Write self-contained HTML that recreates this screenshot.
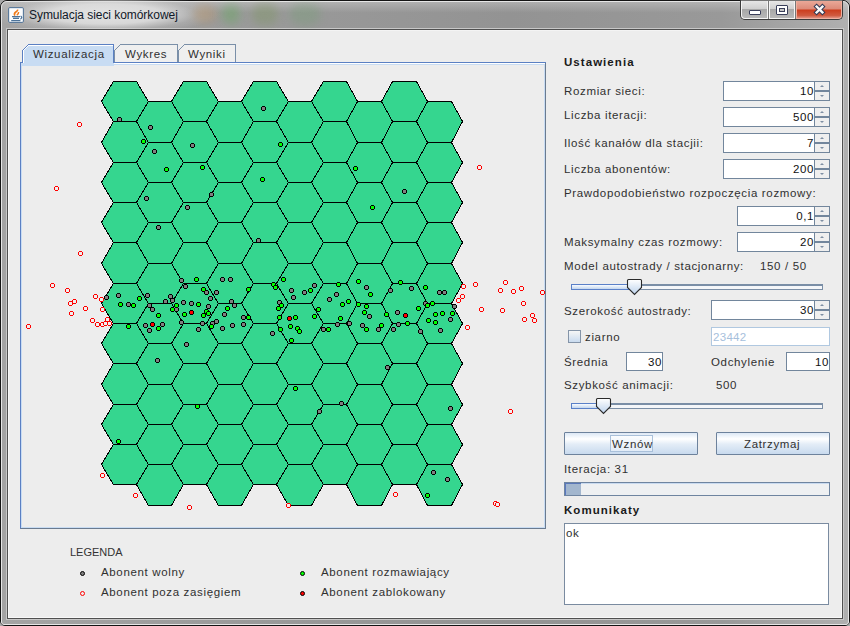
<!DOCTYPE html>
<html><head><meta charset="utf-8">
<style>
*{margin:0;padding:0;box-sizing:border-box}
html,body{width:850px;height:626px;overflow:hidden;background:#a8a8a8}
body{position:relative;font-family:"Liberation Sans",sans-serif;font-size:11px;color:#1e1e1e}
.a{position:absolute}
#win{left:0;top:0;width:850px;height:626px;border:1px solid #141414;border-radius:7px 7px 5px 5px;
 background:linear-gradient(90deg,#a4a4a4 0%,#9a9a9a 30%,#939393 60%,#999 85%,#b0b0b0 100%)}
#content{left:7px;top:29px;width:836px;height:590px;border:1px solid #505050;background:#ededed}
#glow{left:-10px;top:-6px;width:230px;height:40px;background:radial-gradient(ellipse 50% 50% at 50% 50%,rgba(232,232,232,.95) 0%,rgba(225,225,225,.85) 50%,rgba(200,200,200,.3) 80%,rgba(160,160,160,0) 100%)}
.blob{filter:blur(4px);border-radius:40%}
#title{left:29px;top:8px;font-size:12px;color:#101828;white-space:nowrap;letter-spacing:-0.05px}
.t{position:absolute;white-space:nowrap;font-size:11.5px;letter-spacing:0.65px;color:#303030;margin-top:1px}
.b{font-weight:bold;letter-spacing:1.05px;color:#1a1a1a}
.spin{position:absolute;background:#fff;border:1px solid #72869c;height:20px}
.spin .v{position:absolute;right:15px;top:3px;font-size:11.5px;letter-spacing:.6px;color:#111}
.spin .btn{position:absolute;right:0;top:0;width:15px;height:18px;border-left:1px solid #72869c;background:#efefef}
.spin .mid{position:absolute;left:0;top:8px;width:14px;height:2px;background:#72869c}
.spin .up{position:absolute;left:5px;top:3px;width:0;height:0;border-left:2.5px solid transparent;border-right:2.5px solid transparent;border-bottom:2.5px solid #7f8fa3}
.spin .dn{position:absolute;left:5px;top:13px;width:0;height:0;border-left:2.5px solid transparent;border-right:2.5px solid transparent;border-top:2.5px solid #7f8fa3}
.tf{position:absolute;background:#fff;border:1px solid #72869c}
.tf .v{position:absolute;right:0px;top:3px;font-size:11.5px;letter-spacing:.6px;color:#111}
.dot{position:absolute;width:5px;height:5px;border-radius:50%;border:1px solid #000}
</style></head><body>
<div id="win" class="a"></div>
<div class="a" style="left:1px;top:1px;width:848px;height:624px;border:1px solid #e6e6e6;border-radius:6px 6px 3px 3px"></div>
<div class="a" style="left:2px;top:2px;width:846px;height:27px;border-radius:5px 5px 0 0;background:linear-gradient(180deg,rgba(255,255,255,.25),rgba(255,255,255,0) 40%)"></div>
<div class="a" style="left:6px;top:28px;width:838px;height:592px;border:1px solid #c8c8c8"></div>
<div id="glow" class="a"></div>
<div class="a blob" style="left:194px;top:5px;width:22px;height:18px;background:rgba(190,140,80,.3)"></div>
<div class="a blob" style="left:222px;top:4px;width:18px;height:20px;background:rgba(90,170,80,.35)"></div>
<div class="a blob" style="left:252px;top:3px;width:26px;height:22px;background:rgba(120,150,90,.35)"></div>
<div class="a blob" style="left:290px;top:3px;width:30px;height:22px;background:rgba(110,160,110,.3)"></div>
<div id="title" class="a">Symulacja sieci komórkowej</div>
<!-- java icon -->
<div class="a" style="left:8px;top:7px;width:16px;height:16px;border:1px solid #5d7b9b;border-radius:2px;background:#fbfcfd;box-shadow:inset 0 0 0 1px #dfe7ef"></div>
<svg class="a" style="left:8px;top:7px" width="16" height="16">
<path d="M6.8 8.6 Q5.6 6.6 7.8 5 Q9.6 3.8 9.8 2.6" stroke="#ef7a1a" stroke-width="1.6" fill="none"/>
<path d="M8.8 8.3 Q10.8 6.8 10.6 5" stroke="#ef7a1a" stroke-width="1.4" fill="none"/>
<path d="M4 9.6 H12 M5 11.4 H11 M3.2 13.6 H12.4" stroke="#4d7399" stroke-width="1.1" fill="none"/>
<path d="M12.6 9 Q15 10.4 12.4 12.2" stroke="#4d7399" stroke-width="1.2" fill="none"/>
</svg>
<!-- caption buttons -->
<div class="a" style="left:740px;top:0px;width:103px;height:20px;border:1px solid #3c3c3c;border-top:none;border-radius:0 0 5px 5px;background:#777"></div>
<div class="a" style="left:741px;top:1px;width:27px;height:18px;border-radius:0 0 0 4px;border:1px solid #f4f4f4;border-top:none;background:linear-gradient(#e6e6e6,#d0d0d0 45%,#a8a8a8 50%,#b8b8b8)"></div>
<div class="a" style="left:769px;top:1px;width:26px;height:18px;border:1px solid #f4f4f4;border-top:none;background:linear-gradient(#e6e6e6,#d0d0d0 45%,#a8a8a8 50%,#b8b8b8)"></div>
<div class="a" style="left:796px;top:1px;width:46px;height:18px;border-radius:0 0 4px 0;border:1px solid #f0b0a0;border-top:none;background:linear-gradient(#eaa898,#dc8a78 48%,#cc3c1c 52%,#d05a40 85%,#e09080)"></div>
<div class="a" style="left:749px;top:10px;width:12px;height:5px;border:1px solid #3a3f5a;border-radius:1px;background:#fff"></div>
<div class="a" style="left:776px;top:5px;width:12px;height:10px;border:1px solid #3a3f5a;border-radius:1px;background:#fff"></div>
<div class="a" style="left:779px;top:8px;width:6px;height:4px;border:1px solid #3a3f5a;background:#c8c8c8"></div>
<svg class="a" style="left:812px;top:3px" width="15" height="13">
<path d="M4.6 3.6 L10.4 9.4 M10.4 3.6 L4.6 9.4" stroke="#333a55" stroke-width="4.4" stroke-linecap="square"/>
<path d="M4.6 3.6 L10.4 9.4 M10.4 3.6 L4.6 9.4" stroke="#fafafa" stroke-width="2.4" stroke-linecap="square"/>
</svg>
<div id="content" class="a"></div>
<div class="a" style="left:8px;top:30px;width:834px;height:588px;border:1px solid #f8f8f8;border-top-color:#f4f4f4"></div>

<!-- tabs panel -->
<div class="a" style="left:20px;top:62px;width:526px;height:467px;border-top:1px solid #5b80c3;border-left:1px solid #5b80c3;border-right:1px solid #6a7b90;border-bottom:1px solid #6a7b90;background:#ededed"></div>
<div class="a" style="left:21px;top:63px;width:524px;height:465px;border-top:1px solid #fff;border-left:1px solid #c8dcf3;border-right:1px solid #c8dcf3;border-bottom:1px solid #c8dcf3"></div>

<!--GRID--><svg class="a" style="left:0;top:0" width="850" height="626" shape-rendering="crispEdges">
<g fill="#35d68f" stroke="#000" stroke-width="1">
<polygon points="101.5,101.5 113.5,81.5 136.5,81.5 148.5,101.5 136.5,121.5 113.5,121.5"/>
<polygon points="101.5,142.5 113.5,121.5 136.5,121.5 148.5,142.5 136.5,162.5 113.5,162.5"/>
<polygon points="101.5,182.5 113.5,162.5 136.5,162.5 148.5,182.5 136.5,202.5 113.5,202.5"/>
<polygon points="101.5,222.5 113.5,202.5 136.5,202.5 148.5,222.5 136.5,242.5 113.5,242.5"/>
<polygon points="101.5,263.5 113.5,242.5 136.5,242.5 148.5,263.5 136.5,283.5 113.5,283.5"/>
<polygon points="101.5,303.5 113.5,283.5 136.5,283.5 148.5,303.5 136.5,323.5 113.5,323.5"/>
<polygon points="101.5,343.5 113.5,323.5 136.5,323.5 148.5,343.5 136.5,363.5 113.5,363.5"/>
<polygon points="101.5,384.5 113.5,363.5 136.5,363.5 148.5,384.5 136.5,404.5 113.5,404.5"/>
<polygon points="101.5,424.5 113.5,404.5 136.5,404.5 148.5,424.5 136.5,444.5 113.5,444.5"/>
<polygon points="101.5,464.5 113.5,444.5 136.5,444.5 148.5,464.5 136.5,484.5 113.5,484.5"/>
<polygon points="136.5,121.5 148.5,101.5 171.5,101.5 183.5,121.5 171.5,142.5 148.5,142.5"/>
<polygon points="136.5,162.5 148.5,142.5 171.5,142.5 183.5,162.5 171.5,182.5 148.5,182.5"/>
<polygon points="136.5,202.5 148.5,182.5 171.5,182.5 183.5,202.5 171.5,222.5 148.5,222.5"/>
<polygon points="136.5,242.5 148.5,222.5 171.5,222.5 183.5,242.5 171.5,263.5 148.5,263.5"/>
<polygon points="136.5,283.5 148.5,263.5 171.5,263.5 183.5,283.5 171.5,303.5 148.5,303.5"/>
<polygon points="136.5,323.5 148.5,303.5 171.5,303.5 183.5,323.5 171.5,343.5 148.5,343.5"/>
<polygon points="136.5,363.5 148.5,343.5 171.5,343.5 183.5,363.5 171.5,384.5 148.5,384.5"/>
<polygon points="136.5,404.5 148.5,384.5 171.5,384.5 183.5,404.5 171.5,424.5 148.5,424.5"/>
<polygon points="136.5,444.5 148.5,424.5 171.5,424.5 183.5,444.5 171.5,464.5 148.5,464.5"/>
<polygon points="136.5,484.5 148.5,464.5 171.5,464.5 183.5,484.5 171.5,505.5 148.5,505.5"/>
<polygon points="171.5,101.5 183.5,81.5 206.5,81.5 218.5,101.5 206.5,121.5 183.5,121.5"/>
<polygon points="171.5,142.5 183.5,121.5 206.5,121.5 218.5,142.5 206.5,162.5 183.5,162.5"/>
<polygon points="171.5,182.5 183.5,162.5 206.5,162.5 218.5,182.5 206.5,202.5 183.5,202.5"/>
<polygon points="171.5,222.5 183.5,202.5 206.5,202.5 218.5,222.5 206.5,242.5 183.5,242.5"/>
<polygon points="171.5,263.5 183.5,242.5 206.5,242.5 218.5,263.5 206.5,283.5 183.5,283.5"/>
<polygon points="171.5,303.5 183.5,283.5 206.5,283.5 218.5,303.5 206.5,323.5 183.5,323.5"/>
<polygon points="171.5,343.5 183.5,323.5 206.5,323.5 218.5,343.5 206.5,363.5 183.5,363.5"/>
<polygon points="171.5,384.5 183.5,363.5 206.5,363.5 218.5,384.5 206.5,404.5 183.5,404.5"/>
<polygon points="171.5,424.5 183.5,404.5 206.5,404.5 218.5,424.5 206.5,444.5 183.5,444.5"/>
<polygon points="171.5,464.5 183.5,444.5 206.5,444.5 218.5,464.5 206.5,484.5 183.5,484.5"/>
<polygon points="206.5,121.5 218.5,101.5 241.5,101.5 253.5,121.5 241.5,142.5 218.5,142.5"/>
<polygon points="206.5,162.5 218.5,142.5 241.5,142.5 253.5,162.5 241.5,182.5 218.5,182.5"/>
<polygon points="206.5,202.5 218.5,182.5 241.5,182.5 253.5,202.5 241.5,222.5 218.5,222.5"/>
<polygon points="206.5,242.5 218.5,222.5 241.5,222.5 253.5,242.5 241.5,263.5 218.5,263.5"/>
<polygon points="206.5,283.5 218.5,263.5 241.5,263.5 253.5,283.5 241.5,303.5 218.5,303.5"/>
<polygon points="206.5,323.5 218.5,303.5 241.5,303.5 253.5,323.5 241.5,343.5 218.5,343.5"/>
<polygon points="206.5,363.5 218.5,343.5 241.5,343.5 253.5,363.5 241.5,384.5 218.5,384.5"/>
<polygon points="206.5,404.5 218.5,384.5 241.5,384.5 253.5,404.5 241.5,424.5 218.5,424.5"/>
<polygon points="206.5,444.5 218.5,424.5 241.5,424.5 253.5,444.5 241.5,464.5 218.5,464.5"/>
<polygon points="206.5,484.5 218.5,464.5 241.5,464.5 253.5,484.5 241.5,505.5 218.5,505.5"/>
<polygon points="241.5,101.5 253.5,81.5 276.5,81.5 288.5,101.5 276.5,121.5 253.5,121.5"/>
<polygon points="241.5,142.5 253.5,121.5 276.5,121.5 288.5,142.5 276.5,162.5 253.5,162.5"/>
<polygon points="241.5,182.5 253.5,162.5 276.5,162.5 288.5,182.5 276.5,202.5 253.5,202.5"/>
<polygon points="241.5,222.5 253.5,202.5 276.5,202.5 288.5,222.5 276.5,242.5 253.5,242.5"/>
<polygon points="241.5,263.5 253.5,242.5 276.5,242.5 288.5,263.5 276.5,283.5 253.5,283.5"/>
<polygon points="241.5,303.5 253.5,283.5 276.5,283.5 288.5,303.5 276.5,323.5 253.5,323.5"/>
<polygon points="241.5,343.5 253.5,323.5 276.5,323.5 288.5,343.5 276.5,363.5 253.5,363.5"/>
<polygon points="241.5,384.5 253.5,363.5 276.5,363.5 288.5,384.5 276.5,404.5 253.5,404.5"/>
<polygon points="241.5,424.5 253.5,404.5 276.5,404.5 288.5,424.5 276.5,444.5 253.5,444.5"/>
<polygon points="241.5,464.5 253.5,444.5 276.5,444.5 288.5,464.5 276.5,484.5 253.5,484.5"/>
<polygon points="276.5,121.5 288.5,101.5 311.5,101.5 323.5,121.5 311.5,142.5 288.5,142.5"/>
<polygon points="276.5,162.5 288.5,142.5 311.5,142.5 323.5,162.5 311.5,182.5 288.5,182.5"/>
<polygon points="276.5,202.5 288.5,182.5 311.5,182.5 323.5,202.5 311.5,222.5 288.5,222.5"/>
<polygon points="276.5,242.5 288.5,222.5 311.5,222.5 323.5,242.5 311.5,263.5 288.5,263.5"/>
<polygon points="276.5,283.5 288.5,263.5 311.5,263.5 323.5,283.5 311.5,303.5 288.5,303.5"/>
<polygon points="276.5,323.5 288.5,303.5 311.5,303.5 323.5,323.5 311.5,343.5 288.5,343.5"/>
<polygon points="276.5,363.5 288.5,343.5 311.5,343.5 323.5,363.5 311.5,384.5 288.5,384.5"/>
<polygon points="276.5,404.5 288.5,384.5 311.5,384.5 323.5,404.5 311.5,424.5 288.5,424.5"/>
<polygon points="276.5,444.5 288.5,424.5 311.5,424.5 323.5,444.5 311.5,464.5 288.5,464.5"/>
<polygon points="276.5,484.5 288.5,464.5 311.5,464.5 323.5,484.5 311.5,505.5 288.5,505.5"/>
<polygon points="311.5,101.5 323.5,81.5 346.5,81.5 357.5,101.5 346.5,121.5 323.5,121.5"/>
<polygon points="311.5,142.5 323.5,121.5 346.5,121.5 357.5,142.5 346.5,162.5 323.5,162.5"/>
<polygon points="311.5,182.5 323.5,162.5 346.5,162.5 357.5,182.5 346.5,202.5 323.5,202.5"/>
<polygon points="311.5,222.5 323.5,202.5 346.5,202.5 357.5,222.5 346.5,242.5 323.5,242.5"/>
<polygon points="311.5,263.5 323.5,242.5 346.5,242.5 357.5,263.5 346.5,283.5 323.5,283.5"/>
<polygon points="311.5,303.5 323.5,283.5 346.5,283.5 357.5,303.5 346.5,323.5 323.5,323.5"/>
<polygon points="311.5,343.5 323.5,323.5 346.5,323.5 357.5,343.5 346.5,363.5 323.5,363.5"/>
<polygon points="311.5,384.5 323.5,363.5 346.5,363.5 357.5,384.5 346.5,404.5 323.5,404.5"/>
<polygon points="311.5,424.5 323.5,404.5 346.5,404.5 357.5,424.5 346.5,444.5 323.5,444.5"/>
<polygon points="311.5,464.5 323.5,444.5 346.5,444.5 357.5,464.5 346.5,484.5 323.5,484.5"/>
<polygon points="346.5,121.5 357.5,101.5 381.5,101.5 392.5,121.5 381.5,142.5 357.5,142.5"/>
<polygon points="346.5,162.5 357.5,142.5 381.5,142.5 392.5,162.5 381.5,182.5 357.5,182.5"/>
<polygon points="346.5,202.5 357.5,182.5 381.5,182.5 392.5,202.5 381.5,222.5 357.5,222.5"/>
<polygon points="346.5,242.5 357.5,222.5 381.5,222.5 392.5,242.5 381.5,263.5 357.5,263.5"/>
<polygon points="346.5,283.5 357.5,263.5 381.5,263.5 392.5,283.5 381.5,303.5 357.5,303.5"/>
<polygon points="346.5,323.5 357.5,303.5 381.5,303.5 392.5,323.5 381.5,343.5 357.5,343.5"/>
<polygon points="346.5,363.5 357.5,343.5 381.5,343.5 392.5,363.5 381.5,384.5 357.5,384.5"/>
<polygon points="346.5,404.5 357.5,384.5 381.5,384.5 392.5,404.5 381.5,424.5 357.5,424.5"/>
<polygon points="346.5,444.5 357.5,424.5 381.5,424.5 392.5,444.5 381.5,464.5 357.5,464.5"/>
<polygon points="346.5,484.5 357.5,464.5 381.5,464.5 392.5,484.5 381.5,505.5 357.5,505.5"/>
<polygon points="381.5,101.5 392.5,81.5 416.5,81.5 427.5,101.5 416.5,121.5 392.5,121.5"/>
<polygon points="381.5,142.5 392.5,121.5 416.5,121.5 427.5,142.5 416.5,162.5 392.5,162.5"/>
<polygon points="381.5,182.5 392.5,162.5 416.5,162.5 427.5,182.5 416.5,202.5 392.5,202.5"/>
<polygon points="381.5,222.5 392.5,202.5 416.5,202.5 427.5,222.5 416.5,242.5 392.5,242.5"/>
<polygon points="381.5,263.5 392.5,242.5 416.5,242.5 427.5,263.5 416.5,283.5 392.5,283.5"/>
<polygon points="381.5,303.5 392.5,283.5 416.5,283.5 427.5,303.5 416.5,323.5 392.5,323.5"/>
<polygon points="381.5,343.5 392.5,323.5 416.5,323.5 427.5,343.5 416.5,363.5 392.5,363.5"/>
<polygon points="381.5,384.5 392.5,363.5 416.5,363.5 427.5,384.5 416.5,404.5 392.5,404.5"/>
<polygon points="381.5,424.5 392.5,404.5 416.5,404.5 427.5,424.5 416.5,444.5 392.5,444.5"/>
<polygon points="381.5,464.5 392.5,444.5 416.5,444.5 427.5,464.5 416.5,484.5 392.5,484.5"/>
<polygon points="416.5,121.5 427.5,101.5 451.5,101.5 462.5,121.5 451.5,142.5 427.5,142.5"/>
<polygon points="416.5,162.5 427.5,142.5 451.5,142.5 462.5,162.5 451.5,182.5 427.5,182.5"/>
<polygon points="416.5,202.5 427.5,182.5 451.5,182.5 462.5,202.5 451.5,222.5 427.5,222.5"/>
<polygon points="416.5,242.5 427.5,222.5 451.5,222.5 462.5,242.5 451.5,263.5 427.5,263.5"/>
<polygon points="416.5,283.5 427.5,263.5 451.5,263.5 462.5,283.5 451.5,303.5 427.5,303.5"/>
<polygon points="416.5,323.5 427.5,303.5 451.5,303.5 462.5,323.5 451.5,343.5 427.5,343.5"/>
<polygon points="416.5,363.5 427.5,343.5 451.5,343.5 462.5,363.5 451.5,384.5 427.5,384.5"/>
<polygon points="416.5,404.5 427.5,384.5 451.5,384.5 462.5,404.5 451.5,424.5 427.5,424.5"/>
<polygon points="416.5,444.5 427.5,424.5 451.5,424.5 462.5,444.5 451.5,464.5 427.5,464.5"/>
<polygon points="416.5,484.5 427.5,464.5 451.5,464.5 462.5,484.5 451.5,505.5 427.5,505.5"/>
</g>
<g stroke-width="1">
<circle cx="79.5" cy="124.5" r="2" fill="#f0f0f0" stroke="#ff0000"/>
<circle cx="119.5" cy="119.5" r="2" fill="#808080" stroke="#000"/>
<circle cx="143.5" cy="141.5" r="2" fill="#00ff00" stroke="#000"/>
<circle cx="150.5" cy="127.5" r="2" fill="#808080" stroke="#000"/>
<circle cx="154.5" cy="151.5" r="2" fill="#808080" stroke="#000"/>
<circle cx="192.5" cy="145.5" r="2" fill="#808080" stroke="#000"/>
<circle cx="166.5" cy="169.5" r="2" fill="#00ff00" stroke="#000"/>
<circle cx="202.5" cy="167.5" r="2" fill="#00ff00" stroke="#000"/>
<circle cx="263.5" cy="108.5" r="2" fill="#808080" stroke="#000"/>
<circle cx="280.5" cy="144.5" r="2" fill="#00ff00" stroke="#000"/>
<circle cx="56.5" cy="188.5" r="2" fill="#f0f0f0" stroke="#ff0000"/>
<circle cx="146.5" cy="198.5" r="2" fill="#808080" stroke="#000"/>
<circle cx="158.5" cy="227.5" r="2" fill="#808080" stroke="#000"/>
<circle cx="80.5" cy="253.5" r="2" fill="#f0f0f0" stroke="#ff0000"/>
<circle cx="262.5" cy="179.5" r="2" fill="#00ff00" stroke="#000"/>
<circle cx="211.5" cy="194.5" r="2" fill="#808080" stroke="#000"/>
<circle cx="187.5" cy="207.5" r="2" fill="#808080" stroke="#000"/>
<circle cx="258.5" cy="240.5" r="2" fill="#808080" stroke="#000"/>
<circle cx="355.5" cy="168.5" r="2" fill="#00ff00" stroke="#000"/>
<circle cx="404.5" cy="191.5" r="2" fill="#808080" stroke="#000"/>
<circle cx="372.5" cy="207.5" r="2" fill="#00ff00" stroke="#000"/>
<circle cx="479.5" cy="167.5" r="2" fill="#f0f0f0" stroke="#ff0000"/>
<circle cx="52.5" cy="285.5" r="2" fill="#f0f0f0" stroke="#ff0000"/>
<circle cx="67.5" cy="290.5" r="2" fill="#f0f0f0" stroke="#ff0000"/>
<circle cx="70.5" cy="303.5" r="2" fill="#f0f0f0" stroke="#ff0000"/>
<circle cx="74.5" cy="301.5" r="2" fill="#f0f0f0" stroke="#ff0000"/>
<circle cx="85.5" cy="308.5" r="2" fill="#f0f0f0" stroke="#ff0000"/>
<circle cx="71.5" cy="313.5" r="2" fill="#f0f0f0" stroke="#ff0000"/>
<circle cx="95.5" cy="296.5" r="2" fill="#f0f0f0" stroke="#ff0000"/>
<circle cx="101.5" cy="299.5" r="2" fill="#f0f0f0" stroke="#ff0000"/>
<circle cx="102.5" cy="309.5" r="2" fill="#f0f0f0" stroke="#ff0000"/>
<circle cx="92.5" cy="320.5" r="2" fill="#f0f0f0" stroke="#ff0000"/>
<circle cx="97.5" cy="324.5" r="2" fill="#f0f0f0" stroke="#ff0000"/>
<circle cx="102.5" cy="324.5" r="2" fill="#f0f0f0" stroke="#ff0000"/>
<circle cx="105.5" cy="323.5" r="2" fill="#f0f0f0" stroke="#ff0000"/>
<circle cx="107.5" cy="319.5" r="2" fill="#f0f0f0" stroke="#ff0000"/>
<circle cx="109.5" cy="323.5" r="2" fill="#f0f0f0" stroke="#ff0000"/>
<circle cx="28.5" cy="326.5" r="2" fill="#f0f0f0" stroke="#ff0000"/>
<circle cx="106.5" cy="297.5" r="2" fill="#808080" stroke="#000"/>
<circle cx="118.5" cy="295.5" r="2" fill="#808080" stroke="#000"/>
<circle cx="120.5" cy="304.5" r="2" fill="#00ff00" stroke="#000"/>
<circle cx="128.5" cy="304.5" r="2" fill="#808080" stroke="#000"/>
<circle cx="133.5" cy="305.5" r="2" fill="#00ff00" stroke="#000"/>
<circle cx="139.5" cy="298.5" r="2" fill="#00ff00" stroke="#000"/>
<circle cx="147.5" cy="295.5" r="2" fill="#808080" stroke="#000"/>
<circle cx="149.5" cy="305.5" r="2" fill="#808080" stroke="#000"/>
<circle cx="152.5" cy="309.5" r="2" fill="#808080" stroke="#000"/>
<circle cx="158.5" cy="315.5" r="2" fill="#00ff00" stroke="#000"/>
<circle cx="145.5" cy="325.5" r="2" fill="#808080" stroke="#000"/>
<circle cx="152.5" cy="324.5" r="2" fill="#ff0000" stroke="#000"/>
<circle cx="149.5" cy="330.5" r="2" fill="#808080" stroke="#000"/>
<circle cx="158.5" cy="328.5" r="2" fill="#00ff00" stroke="#000"/>
<circle cx="162.5" cy="324.5" r="2" fill="#808080" stroke="#000"/>
<circle cx="128.5" cy="326.5" r="2" fill="#00ff00" stroke="#000"/>
<circle cx="165.5" cy="301.5" r="2" fill="#808080" stroke="#000"/>
<circle cx="170.5" cy="296.5" r="2" fill="#808080" stroke="#000"/>
<circle cx="172.5" cy="300.5" r="2" fill="#808080" stroke="#000"/>
<circle cx="176.5" cy="305.5" r="2" fill="#00ff00" stroke="#000"/>
<circle cx="172.5" cy="309.5" r="2" fill="#00ff00" stroke="#000"/>
<circle cx="176.5" cy="309.5" r="2" fill="#808080" stroke="#000"/>
<circle cx="181.5" cy="280.5" r="2" fill="#808080" stroke="#000"/>
<circle cx="196.5" cy="279.5" r="2" fill="#00ff00" stroke="#000"/>
<circle cx="222.5" cy="279.5" r="2" fill="#808080" stroke="#000"/>
<circle cx="230.5" cy="279.5" r="2" fill="#808080" stroke="#000"/>
<circle cx="185.5" cy="286.5" r="2" fill="#808080" stroke="#000"/>
<circle cx="203.5" cy="289.5" r="2" fill="#00ff00" stroke="#000"/>
<circle cx="206.5" cy="292.5" r="2" fill="#808080" stroke="#000"/>
<circle cx="216.5" cy="292.5" r="2" fill="#808080" stroke="#000"/>
<circle cx="210.5" cy="298.5" r="2" fill="#808080" stroke="#000"/>
<circle cx="248.5" cy="289.5" r="2" fill="#00ff00" stroke="#000"/>
<circle cx="183.5" cy="302.5" r="2" fill="#808080" stroke="#000"/>
<circle cx="191.5" cy="303.5" r="2" fill="#808080" stroke="#000"/>
<circle cx="198.5" cy="304.5" r="2" fill="#00ff00" stroke="#000"/>
<circle cx="208.5" cy="306.5" r="2" fill="#808080" stroke="#000"/>
<circle cx="184.5" cy="314.5" r="2" fill="#00ff00" stroke="#000"/>
<circle cx="191.5" cy="312.5" r="2" fill="#ff0000" stroke="#000"/>
<circle cx="206.5" cy="311.5" r="2" fill="#00ff00" stroke="#000"/>
<circle cx="208.5" cy="313.5" r="2" fill="#00ff00" stroke="#000"/>
<circle cx="203.5" cy="315.5" r="2" fill="#00ff00" stroke="#000"/>
<circle cx="231.5" cy="301.5" r="2" fill="#808080" stroke="#000"/>
<circle cx="234.5" cy="305.5" r="2" fill="#808080" stroke="#000"/>
<circle cx="227.5" cy="308.5" r="2" fill="#00ff00" stroke="#000"/>
<circle cx="224.5" cy="314.5" r="2" fill="#808080" stroke="#000"/>
<circle cx="181.5" cy="322.5" r="2" fill="#808080" stroke="#000"/>
<circle cx="202.5" cy="323.5" r="2" fill="#808080" stroke="#000"/>
<circle cx="212.5" cy="323.5" r="2" fill="#808080" stroke="#000"/>
<circle cx="216.5" cy="321.5" r="2" fill="#808080" stroke="#000"/>
<circle cx="211.5" cy="326.5" r="2" fill="#00ff00" stroke="#000"/>
<circle cx="198.5" cy="329.5" r="2" fill="#808080" stroke="#000"/>
<circle cx="222.5" cy="328.5" r="2" fill="#808080" stroke="#000"/>
<circle cx="232.5" cy="325.5" r="2" fill="#808080" stroke="#000"/>
<circle cx="243.5" cy="324.5" r="2" fill="#808080" stroke="#000"/>
<circle cx="243.5" cy="317.5" r="2" fill="#808080" stroke="#000"/>
<circle cx="248.5" cy="317.5" r="2" fill="#00ff00" stroke="#000"/>
<circle cx="283.5" cy="279.5" r="2" fill="#00ff00" stroke="#000"/>
<circle cx="273.5" cy="284.5" r="2" fill="#00ff00" stroke="#000"/>
<circle cx="275.5" cy="287.5" r="2" fill="#00ff00" stroke="#000"/>
<circle cx="291.5" cy="290.5" r="2" fill="#808080" stroke="#000"/>
<circle cx="293.5" cy="297.5" r="2" fill="#808080" stroke="#000"/>
<circle cx="304.5" cy="292.5" r="2" fill="#808080" stroke="#000"/>
<circle cx="310.5" cy="290.5" r="2" fill="#00ff00" stroke="#000"/>
<circle cx="314.5" cy="285.5" r="2" fill="#808080" stroke="#000"/>
<circle cx="279.5" cy="302.5" r="2" fill="#808080" stroke="#000"/>
<circle cx="281.5" cy="305.5" r="2" fill="#00ff00" stroke="#000"/>
<circle cx="278.5" cy="308.5" r="2" fill="#00ff00" stroke="#000"/>
<circle cx="279.5" cy="317.5" r="2" fill="#00ff00" stroke="#000"/>
<circle cx="289.5" cy="318.5" r="2" fill="#ff0000" stroke="#000"/>
<circle cx="295.5" cy="317.5" r="2" fill="#00ff00" stroke="#000"/>
<circle cx="290.5" cy="326.5" r="2" fill="#00ff00" stroke="#000"/>
<circle cx="297.5" cy="328.5" r="2" fill="#00ff00" stroke="#000"/>
<circle cx="299.5" cy="331.5" r="2" fill="#00ff00" stroke="#000"/>
<circle cx="280.5" cy="329.5" r="2" fill="#00ff00" stroke="#000"/>
<circle cx="272.5" cy="333.5" r="2" fill="#808080" stroke="#000"/>
<circle cx="314.5" cy="316.5" r="2" fill="#00ff00" stroke="#000"/>
<circle cx="318.5" cy="309.5" r="2" fill="#00ff00" stroke="#000"/>
<circle cx="338.5" cy="284.5" r="2" fill="#00ff00" stroke="#000"/>
<circle cx="358.5" cy="281.5" r="2" fill="#00ff00" stroke="#000"/>
<circle cx="366.5" cy="287.5" r="2" fill="#808080" stroke="#000"/>
<circle cx="370.5" cy="294.5" r="2" fill="#00ff00" stroke="#000"/>
<circle cx="336.5" cy="294.5" r="2" fill="#808080" stroke="#000"/>
<circle cx="329.5" cy="299.5" r="2" fill="#808080" stroke="#000"/>
<circle cx="348.5" cy="301.5" r="2" fill="#00ff00" stroke="#000"/>
<circle cx="342.5" cy="304.5" r="2" fill="#00ff00" stroke="#000"/>
<circle cx="358.5" cy="304.5" r="2" fill="#00ff00" stroke="#000"/>
<circle cx="366.5" cy="306.5" r="2" fill="#00ff00" stroke="#000"/>
<circle cx="364.5" cy="312.5" r="2" fill="#00ff00" stroke="#000"/>
<circle cx="369.5" cy="316.5" r="2" fill="#808080" stroke="#000"/>
<circle cx="386.5" cy="314.5" r="2" fill="#00ff00" stroke="#000"/>
<circle cx="340.5" cy="318.5" r="2" fill="#00ff00" stroke="#000"/>
<circle cx="337.5" cy="324.5" r="2" fill="#808080" stroke="#000"/>
<circle cx="349.5" cy="323.5" r="2" fill="#808080" stroke="#000"/>
<circle cx="323.5" cy="329.5" r="2" fill="#808080" stroke="#000"/>
<circle cx="328.5" cy="329.5" r="2" fill="#00ff00" stroke="#000"/>
<circle cx="362.5" cy="325.5" r="2" fill="#808080" stroke="#000"/>
<circle cx="366.5" cy="329.5" r="2" fill="#00ff00" stroke="#000"/>
<circle cx="381.5" cy="325.5" r="2" fill="#00ff00" stroke="#000"/>
<circle cx="378.5" cy="329.5" r="2" fill="#808080" stroke="#000"/>
<circle cx="400.5" cy="282.5" r="2" fill="#00ff00" stroke="#000"/>
<circle cx="390.5" cy="290.5" r="2" fill="#808080" stroke="#000"/>
<circle cx="411.5" cy="288.5" r="2" fill="#808080" stroke="#000"/>
<circle cx="425.5" cy="287.5" r="2" fill="#00ff00" stroke="#000"/>
<circle cx="439.5" cy="292.5" r="2" fill="#808080" stroke="#000"/>
<circle cx="444.5" cy="292.5" r="2" fill="#808080" stroke="#000"/>
<circle cx="425.5" cy="303.5" r="2" fill="#808080" stroke="#000"/>
<circle cx="427.5" cy="305.5" r="2" fill="#00ff00" stroke="#000"/>
<circle cx="432.5" cy="303.5" r="2" fill="#00ff00" stroke="#000"/>
<circle cx="454.5" cy="306.5" r="2" fill="#808080" stroke="#000"/>
<circle cx="418.5" cy="308.5" r="2" fill="#00ff00" stroke="#000"/>
<circle cx="397.5" cy="312.5" r="2" fill="#808080" stroke="#000"/>
<circle cx="405.5" cy="315.5" r="2" fill="#ff0000" stroke="#000"/>
<circle cx="435.5" cy="314.5" r="2" fill="#00ff00" stroke="#000"/>
<circle cx="442.5" cy="313.5" r="2" fill="#00ff00" stroke="#000"/>
<circle cx="452.5" cy="313.5" r="2" fill="#00ff00" stroke="#000"/>
<circle cx="450.5" cy="319.5" r="2" fill="#808080" stroke="#000"/>
<circle cx="428.5" cy="320.5" r="2" fill="#00ff00" stroke="#000"/>
<circle cx="435.5" cy="322.5" r="2" fill="#00ff00" stroke="#000"/>
<circle cx="407.5" cy="323.5" r="2" fill="#00ff00" stroke="#000"/>
<circle cx="398.5" cy="324.5" r="2" fill="#808080" stroke="#000"/>
<circle cx="393.5" cy="329.5" r="2" fill="#808080" stroke="#000"/>
<circle cx="420.5" cy="331.5" r="2" fill="#808080" stroke="#000"/>
<circle cx="440.5" cy="330.5" r="2" fill="#808080" stroke="#000"/>
<circle cx="463.5" cy="286.5" r="2" fill="#f0f0f0" stroke="#ff0000"/>
<circle cx="475.5" cy="284.5" r="2" fill="#f0f0f0" stroke="#ff0000"/>
<circle cx="505.5" cy="282.5" r="2" fill="#f0f0f0" stroke="#ff0000"/>
<circle cx="500.5" cy="290.5" r="2" fill="#f0f0f0" stroke="#ff0000"/>
<circle cx="513.5" cy="291.5" r="2" fill="#f0f0f0" stroke="#ff0000"/>
<circle cx="521.5" cy="288.5" r="2" fill="#f0f0f0" stroke="#ff0000"/>
<circle cx="542.5" cy="292.5" r="2" fill="#f0f0f0" stroke="#ff0000"/>
<circle cx="462.5" cy="296.5" r="2" fill="#f0f0f0" stroke="#ff0000"/>
<circle cx="458.5" cy="300.5" r="2" fill="#f0f0f0" stroke="#ff0000"/>
<circle cx="523.5" cy="303.5" r="2" fill="#f0f0f0" stroke="#ff0000"/>
<circle cx="481.5" cy="309.5" r="2" fill="#f0f0f0" stroke="#ff0000"/>
<circle cx="502.5" cy="310.5" r="2" fill="#f0f0f0" stroke="#ff0000"/>
<circle cx="532.5" cy="315.5" r="2" fill="#f0f0f0" stroke="#ff0000"/>
<circle cx="524.5" cy="319.5" r="2" fill="#f0f0f0" stroke="#ff0000"/>
<circle cx="534.5" cy="320.5" r="2" fill="#f0f0f0" stroke="#ff0000"/>
<circle cx="467.5" cy="327.5" r="2" fill="#f0f0f0" stroke="#ff0000"/>
<circle cx="157.5" cy="360.5" r="2" fill="#808080" stroke="#000"/>
<circle cx="186.5" cy="344.5" r="2" fill="#808080" stroke="#000"/>
<circle cx="291.5" cy="340.5" r="2" fill="#00ff00" stroke="#000"/>
<circle cx="295.5" cy="388.5" r="2" fill="#00ff00" stroke="#000"/>
<circle cx="197.5" cy="406.5" r="2" fill="#00ff00" stroke="#000"/>
<circle cx="319.5" cy="411.5" r="2" fill="#808080" stroke="#000"/>
<circle cx="387.5" cy="367.5" r="2" fill="#808080" stroke="#000"/>
<circle cx="341.5" cy="403.5" r="2" fill="#808080" stroke="#000"/>
<circle cx="450.5" cy="408.5" r="2" fill="#808080" stroke="#000"/>
<circle cx="510.5" cy="411.5" r="2" fill="#f0f0f0" stroke="#ff0000"/>
<circle cx="447.5" cy="479.5" r="2" fill="#808080" stroke="#000"/>
<circle cx="495.5" cy="503.5" r="2" fill="#f0f0f0" stroke="#ff0000"/>
<circle cx="497.5" cy="504.5" r="2" fill="#f0f0f0" stroke="#ff0000"/>
<circle cx="118.5" cy="441.5" r="2" fill="#00ff00" stroke="#000"/>
<circle cx="102.5" cy="475.5" r="2" fill="#f0f0f0" stroke="#ff0000"/>
<circle cx="135.5" cy="495.5" r="2" fill="#f0f0f0" stroke="#ff0000"/>
<circle cx="189.5" cy="507.5" r="2" fill="#f0f0f0" stroke="#ff0000"/>
<circle cx="288.5" cy="505.5" r="2" fill="#f0f0f0" stroke="#ff0000"/>
<circle cx="433.5" cy="472.5" r="2" fill="#808080" stroke="#000"/>
<circle cx="427.5" cy="495.5" r="2" fill="#00ff00" stroke="#000"/>
<circle cx="395.5" cy="494.5" r="2" fill="#f0f0f0" stroke="#ff0000"/>
</g></svg><!--/GRID-->
<!-- tabs -->
<svg class="a" style="left:0;top:0" width="850" height="70" shape-rendering="crispEdges">
<polygon points="114.5,62.5 114.5,50.5 120.5,44.5 177.5,44.5 177.5,62.5" fill="#efefef" stroke="#7a8fa8"/>
<polygon points="178.5,62.5 178.5,50.5 184.5,44.5 235.5,44.5 235.5,62.5" fill="#efefef" stroke="#7a8fa8"/>
<rect x="20" y="62" width="526" height="1" fill="#5b80c3"/>
<rect x="21" y="63" width="524" height="1" fill="#ffffff"/>
<rect x="21" y="64" width="524" height="1" fill="#c8dcf3"/>
<polygon points="20,62 22,62 22,50 28,44 114,44 114,66 21,66 20,66" fill="#c8dcf3"/>
<polyline points="20.5,62.5 22.5,62.5 22.5,50.5 28.5,44.5 113.5,44.5 113.5,62.5" fill="none" stroke="#5b80c3"/>
<polyline points="23.5,62.5 23.5,50.5 28.5,45.5 112.5,45.5" fill="none" stroke="#ffffff"/>
<rect x="20" y="62" width="1" height="8" fill="#5b80c3"/>
</svg>
<div class="t" style="left:33px;top:47px">Wizualizacja</div>
<div class="t" style="left:125px;top:47px">Wykres</div>
<div class="t" style="left:188px;top:47px">Wyniki</div>
<!-- right panel labels -->
<div class="t b" style="left:564px;top:55px">Ustawienia</div>
<div class="t" style="left:564px;top:84px">Rozmiar sieci:</div>
<div class="t" style="left:564px;top:108px">Liczba iteracji:</div>
<div class="t" style="left:564px;top:136px">Ilość kanałów dla stacjii:</div>
<div class="t" style="left:564px;top:162px">Liczba abonentów:</div>
<div class="t" style="left:564px;top:186px">Prawdopodobieństwo rozpoczęcia rozmowy:</div>
<div class="t" style="left:564px;top:235px">Maksymalny czas rozmowy:</div>
<div class="t" style="left:564px;top:259px">Model autostrady / stacjonarny:</div>
<div class="t" style="left:760px;top:259px">150 / 50</div>
<div class="t" style="left:564px;top:304px">Szerokość autostrady:</div>
<div class="t" style="left:585px;top:330px">ziarno</div>
<div class="t" style="left:564px;top:355px">Średnia</div>
<div class="t" style="left:711px;top:355px">Odchylenie</div>
<div class="t" style="left:564px;top:378px">Szybkość animacji:</div>
<div class="t" style="left:716px;top:378px">500</div>
<div class="t" style="left:564px;top:462px">Iteracja: 31</div>
<div class="t b" style="left:564px;top:503px">Komunikaty</div>

<div class="spin" style="left:723px;top:81px;width:107px"><span class="v">10</span><div class="btn"><div class="up"></div><div class="mid"></div><div class="dn"></div></div></div>
<div class="spin" style="left:723px;top:107px;width:107px"><span class="v">500</span><div class="btn"><div class="up"></div><div class="mid"></div><div class="dn"></div></div></div>
<div class="spin" style="left:723px;top:133px;width:107px"><span class="v">7</span><div class="btn"><div class="up"></div><div class="mid"></div><div class="dn"></div></div></div>
<div class="spin" style="left:723px;top:159px;width:107px"><span class="v">200</span><div class="btn"><div class="up"></div><div class="mid"></div><div class="dn"></div></div></div>
<div class="spin" style="left:737px;top:206px;width:93px"><span class="v">0,1</span><div class="btn"><div class="up"></div><div class="mid"></div><div class="dn"></div></div></div>
<div class="spin" style="left:737px;top:232px;width:93px"><span class="v">20</span><div class="btn"><div class="up"></div><div class="mid"></div><div class="dn"></div></div></div>
<div class="spin" style="left:711px;top:300px;width:119px"><span class="v">30</span><div class="btn"><div class="up"></div><div class="mid"></div><div class="dn"></div></div></div>

<div class="tf" style="left:711px;top:327px;width:119px;height:19px;border-color:#b0c8e0"><span class="a" style="left:1px;top:3px;font-size:11.5px;letter-spacing:.3px;color:#a6c0dc">23442</span></div>
<div class="tf" style="left:626px;top:352px;width:37px;height:19px"><span class="v">30</span></div>
<div class="tf" style="left:786px;top:352px;width:44px;height:19px"><span class="v">10</span></div>

<!-- checkbox -->
<div class="a" style="left:568px;top:330px;width:13px;height:13px;border:1px solid #8494a8;background:linear-gradient(#f6f6f6,#c9dbef)"></div>

<!-- sliders -->
<div class="a" style="left:571px;top:284px;width:252px;height:6px;border:1px solid #7a8ea6;border-top-width:2px;background:#f4f6f9"></div>
<div class="a" style="left:571px;top:284px;width:60px;height:6px;border:1px solid #5a80c8;background:linear-gradient(#f8fbff,#c3d6ee)"></div>
<svg class="a" style="left:626px;top:278px" width="17" height="18"><path d="M1.5 2.5 Q1.5 1.5 2.5 1.5 H14.5 Q15.5 1.5 15.5 2.5 V9.5 L8.5 16.5 L1.5 9.5 Z" fill="url(#thg)" stroke="#2a2a2a" stroke-width="1.1"/>
<defs><linearGradient id="thg" x1="0" y1="0" x2="0" y2="1"><stop offset="0" stop-color="#ffffff"/><stop offset="1" stop-color="#bcd2ec"/></linearGradient></defs></svg>
<div class="a" style="left:571px;top:403px;width:252px;height:6px;border:1px solid #7a8ea6;border-top-width:2px;background:#f4f6f9"></div>
<div class="a" style="left:571px;top:403px;width:30px;height:6px;border:1px solid #5a80c8;background:linear-gradient(#f8fbff,#c3d6ee)"></div>
<svg class="a" style="left:595px;top:397px" width="17" height="18"><path d="M1.5 2.5 Q1.5 1.5 2.5 1.5 H14.5 Q15.5 1.5 15.5 2.5 V9.5 L8.5 16.5 L1.5 9.5 Z" fill="url(#thg)" stroke="#2a2a2a" stroke-width="1.1"/></svg>

<!-- buttons -->
<div class="a" style="left:564px;top:432px;width:134px;height:23px;border:1px solid #6d829c;border-radius:1px;background:linear-gradient(#dde8f5 0,#f4f8fc 4px,#ffffff 6px,#e4edf7 11px,#c8daee 100%)"></div>
<div class="a" style="left:716px;top:432px;width:114px;height:23px;border:1px solid #6d829c;border-radius:1px;background:linear-gradient(#dde8f5 0,#f4f8fc 4px,#ffffff 6px,#e4edf7 11px,#c8daee 100%)"></div>
<div class="a" style="left:610px;top:435px;width:43px;height:17px;border:1px solid #a9c0da;background:linear-gradient(#fafcfe,#e2ecf7)"></div>
<div class="t" style="left:612px;top:437px">Wznów</div>
<div class="t" style="left:744px;top:437px">Zatrzymaj</div>

<!-- progress -->
<div class="a" style="left:564px;top:482px;width:266px;height:14px;border:1px solid #6e84a0;background:#eef0f2"></div>
<div class="a" style="left:565px;top:483px;width:264px;height:1px;background:#c8daf0"></div>
<div class="a" style="left:565px;top:483px;width:16px;height:12px;border-left:1px solid #5a78c0;border-top:1px solid #5a78b8;background:#a2b6ce"></div>

<!-- textarea -->
<div class="a" style="left:564px;top:523px;width:265px;height:82px;border:1px solid #7a8ba0;background:#fff"></div>
<div class="t" style="left:566px;top:526px">ok</div>

<!-- legend -->
<div class="t" style="left:70px;top:545px;letter-spacing:0;font-size:11px;color:#333">LEGENDA</div>
<div class="dot" style="left:80px;top:571px;background:#808080"></div>
<div class="dot" style="left:80px;top:591px;background:#ededed;border-color:#ff0000"></div>
<div class="dot" style="left:300px;top:571px;background:#00ff00"></div>
<div class="dot" style="left:300px;top:591px;background:#ff0000"></div>
<div class="t" style="left:101px;top:565px">Abonent wolny</div>
<div class="t" style="left:101px;top:585px">Abonent poza zasięgiem</div>
<div class="t" style="left:321px;top:565px">Abonent rozmawiający</div>
<div class="t" style="left:321px;top:585px">Abonent zablokowany</div>

</body></html>
